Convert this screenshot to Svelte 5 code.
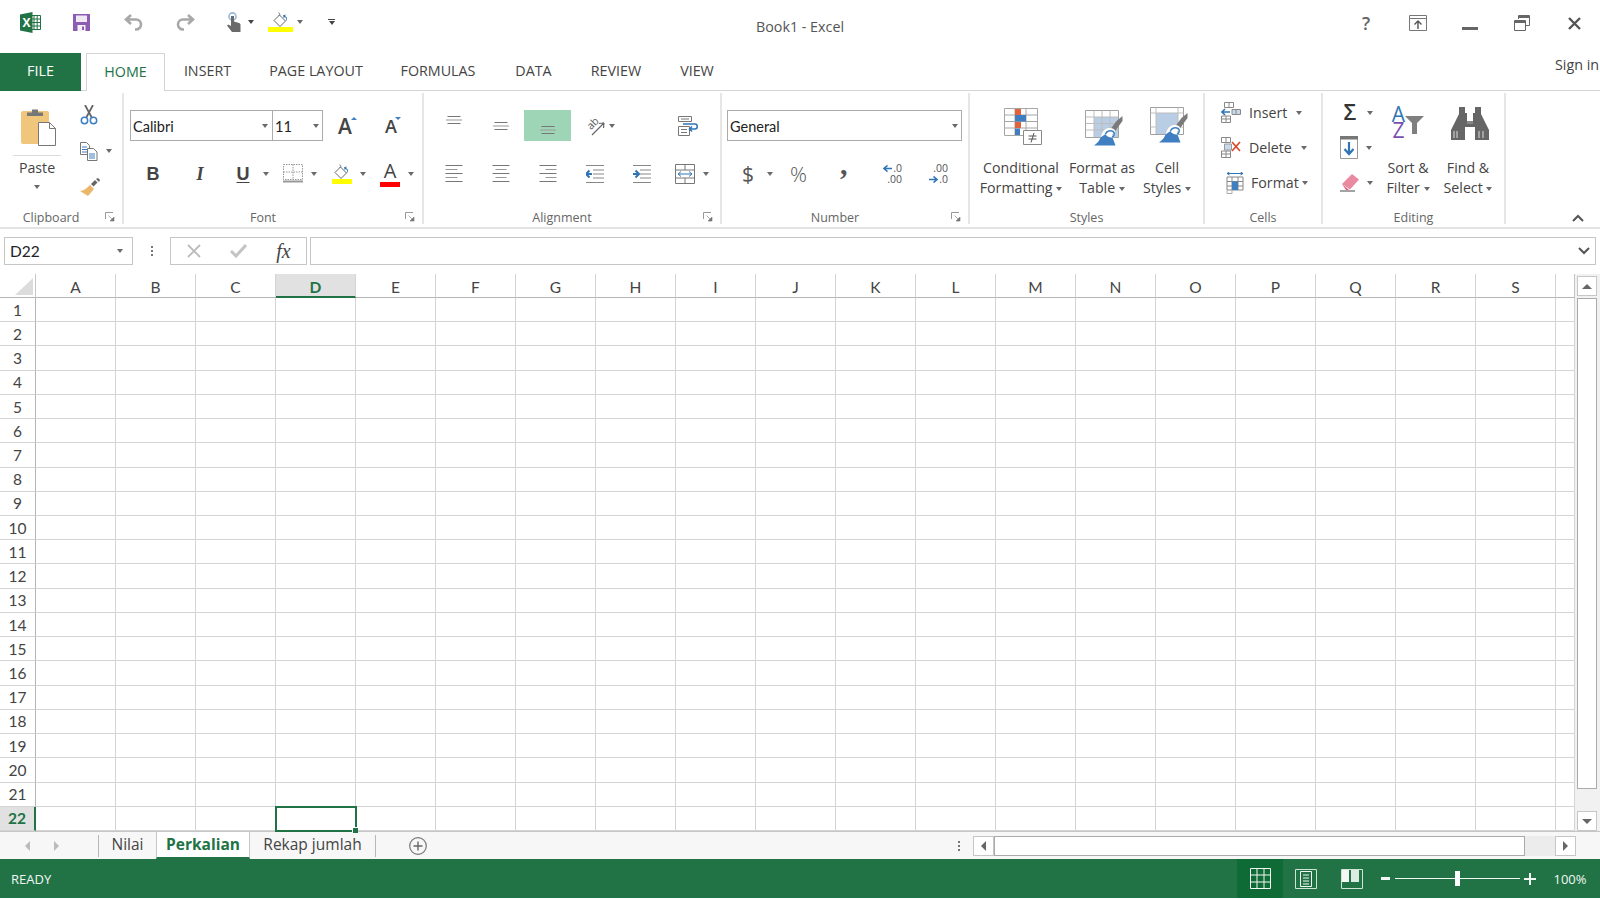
<script>
  const cols = 'ABCDEFGHIJKLMNOPQRS'.split('');
  const rows = Array.from({ length: 22 }, (_, i) => i + 1);
  const tabs = ['HOME', 'INSERT', 'PAGE LAYOUT', 'FORMULAS', 'DATA', 'REVIEW', 'VIEW'];
</script>

{#snippet launcher()}
  <svg class="launcher" width="10" height="10" viewBox="0 0 10 10" aria-hidden="true">
    <path d="M.5 7V.5H8" fill="none" stroke="#999" />
    <path d="M3.5 3.5L8 8M9 5v4H5z" fill="#777" stroke="#777" stroke-width=".6" />
  </svg>
{/snippet}

{#snippet lines(kind, y)}
  <svg width="18" height="20" viewBox="0 0 18 20" aria-hidden="true">
    {#each y as v, i}
      {@const w = y.length === 3 ? (i === 1 ? 16 : 13) : kind === 'left' ? (i % 2 ? 12 : 17) : i % 2 ? 11 : 17}
      {@const x = kind === 'left' ? 0.5 : kind === 'center' ? 9 - w / 2 : 17.5 - w}
      <path d="M{x} {v + 0.5}h{w}" stroke={i % 2 ? '#999' : '#777'} />
    {/each}
  </svg>
{/snippet}

<div class="app">
  <header class="titlebar">
    <div class="qat">
      <svg width="21" height="21" viewBox="0 0 21 21" aria-label="Excel">
        <path d="M11 3.5h9.5v14H11z" fill="#fff" stroke="#217346" />
        <path d="M14 3.5v14M17.2 3.5v14M11 7h9.5M11 10.5h9.5M11 14h9.5" stroke="#217346" />
        <path d="M0 2.6L12.5 0v21L0 18.4z" fill="#217346" />
        <text x="2.4" y="14.6" class="xmark">X</text>
      </svg>
      <svg width="17" height="17" viewBox="0 0 17 17" aria-label="Save">
        <path d="M0 0h17v17H0z" fill="#8b5cb1" />
        <path d="M3 1.5h11v6.5H3z" fill="#efe8f5" />
        <path d="M4.5 11h8v6h-8z" fill="#f4eff8" />
        <path d="M9 12.5h2V16H9z" fill="#8b5cb1" />
      </svg>
      <svg width="19" height="17" viewBox="0 0 19 17" aria-label="Undo">
        <path d="M7 1L2 5.5L7 10M2 5.5H12a5 5 0 0 1 0 10h-1" fill="none" stroke="#a8a8a8" stroke-width="2.6" />
      </svg>
      <svg width="19" height="17" viewBox="0 0 19 17" aria-label="Redo">
        <path d="M12 1L17 5.5L12 10M17 5.5H7a5 5 0 0 0 0 10h1" fill="none" stroke="#a8a8a8" stroke-width="2.6" />
      </svg>
      <span class="split wide">
        <svg width="14" height="20" viewBox="0 0 14 20" aria-label="Touch mode">
          <circle cx="5.5" cy="4.5" r="3.6" fill="none" stroke="#9ab8dc" stroke-width="1.6" />
          <path d="M4 4h3v5.5l5 1.4c1 .3 1.5 1 1.5 2V20H5L0 13.5l1.2-1L4 14z" fill="#6a6a6a" />
        </svg>
        <i class="caret dark"></i>
      </span>
      <span class="split near">
        <span class="fillwrap">
          <svg width="20" height="15" viewBox="0 0 20 15" aria-hidden="true">
            <path d="M7.5 1a1.3 1.3 0 1 1 0 2.6" fill="none" stroke="#777" />
            <path d="M8.5 3L14.5 9L9 14.5L3 8.5z" fill="#fff" stroke="#666" />
            <path d="M15 9C17 7 16 5 14 4l1-1.5-3 .7.8 3 .9-1.3c1.6.8 2.2 2.3.8 3.8z" fill="#2f75b5" />
          </svg>
          <b class="swatch yellow"></b>
        </span>
        <i class="caret"></i>
      </span>
      <span class="custom"><b></b><i class="caret dark"></i></span>
    </div>
    <div class="doc-title">Book1 - Excel</div>
    <div class="winctl">
      <span class="help">?</span>
      <svg width="18" height="16" viewBox="0 0 18 16" aria-label="Ribbon display options">
        <path d="M.5 .5h17v15H.5zM.5 3.5h17" fill="none" stroke="#777" />
        <path d="M9 14V6.5M5.5 9.5L9 6l3.500 3.500" fill="none" stroke="#555" stroke-width="1.400" />
      </svg>
      <svg class="low" width="16" height="3" viewBox="0 0 16 3" aria-label="Minimize"><path d="M0 0h16v3H0z" fill="#666" /></svg>
      <svg width="16" height="16" viewBox="0 0 16 16" aria-label="Restore">
        <path d="M4.500 4V.5h11v10H12" fill="none" stroke="#666" />
        <path d="M4.500 2h11" stroke="#666" stroke-width="2" />
        <path d="M.5 5.500h11v10H.5z" fill="#fff" stroke="#666" />
        <path d="M.5 7h11" stroke="#666" stroke-width="2" />
      </svg>
      <svg width="13" height="13" viewBox="0 0 13 13" aria-label="Close"><path d="M1 1l11 11M12 1L1 12" stroke="#555" stroke-width="2.400" /></svg>
    </div>
  </header>

  <nav class="tabrow">
    <div class="file-tab">FILE</div>
    <div class="tabs">
      {#each tabs as tab, i}
        <div class="tab" class:active={i === 0}>{tab}</div>
      {/each}
    </div>
    <div class="signin">Sign in</div>
  </nav>

  <section class="ribbon">
    <div class="group clipboard">
      <div class="body clip-body">
        <div class="paste">
          <svg width="36" height="39" viewBox="0 0 36 39" aria-hidden="true">
            <rect x="0" y="4" width="28" height="33" rx="2" fill="#efc67b" />
            <path d="M6 5.500h16V9H6zM11 2.500h6v4h-6z" fill="#777" />
            <path d="M17.500 15.500h11l6 6v17h-17z" fill="#fff" stroke="#777" />
            <path d="M28.500 15.500v6h6" fill="none" stroke="#777" />
          </svg>
          <div class="paste-line"></div>
          <span>Paste</span>
          <i class="caret"></i>
        </div>
        <div class="clip-small">
          <svg width="18" height="20" viewBox="0 0 18 20" aria-label="Cut">
            <path d="M5 0l7 13M13 0L6 13" stroke="#666" stroke-width="1.800" />
            <circle cx="4.500" cy="15.500" r="3.200" fill="none" stroke="#3f7fc1" stroke-width="1.500" />
            <circle cx="13.500" cy="15.500" r="3.200" fill="none" stroke="#3f7fc1" stroke-width="1.500" />
          </svg>
          <span class="split copy">
            <svg width="18" height="19" viewBox="0 0 18 19" aria-label="Copy">
              <path d="M.5 .5h6l3 3v9h-9z" fill="#fff" stroke="#777" />
              <path d="M2 5h5M2 7.500h5M2 10h5" stroke="#3f7fc1" />
              <path d="M7.500 6.500h6l3.500 3.500v8.500H7.500z" fill="#fff" stroke="#777" />
              <path d="M9 12h6M9 14h6M9 16h6" stroke="#3f7fc1" />
            </svg>
            <i class="caret"></i>
          </span>
          <svg width="20" height="18" viewBox="0 0 20 18" aria-label="Format painter">
            <path d="M11 6l4-4 2.500 2.500-4 4z" fill="#666" />
            <path d="M16 1l2-1 2 2-1 2z" fill="#666" />
            <path d="M10 7l4 4-6 7-8-5c3 0 7-3 10-6z" fill="#e9b66a" />
          </svg>
        </div>
      </div>
      <div class="label has-launcher">Clipboard{@render launcher()}</div>
    </div>

    <div class="group font">
      <div class="body two-rows">
        <div class="font-top">
          <div class="combo font-name"><span>Calibri</span><i class="caret"></i></div>
          <div class="combo font-size"><span>11</span><i class="caret"></i></div>
          <span class="sizer big">A<b class="up"></b></span>
          <span class="sizer small">A<b class="down"></b></span>
        </div>
        <div class="font-bottom">
          <span class="fmt bold">B</span>
          <span class="fmt ital">I</span>
          <span class="split u-split"><span class="fmt under">U</span><i class="caret"></i></span>
          <span class="split">
            <svg width="20" height="19" viewBox="0 0 20 19" aria-label="Borders">
              <path d="M.5 .5h19v15H.5zM10 .5v15M.5 8h19" fill="none" stroke="#999" stroke-dasharray="1.500 1" />
              <path d="M0 17.500h20" stroke="#999" stroke-width="2" />
            </svg>
            <i class="caret"></i>
          </span>
          <span class="split">
            <span class="fillwrap narrow">
              <svg width="20" height="15" viewBox="0 0 20 15" aria-hidden="true">
                <path d="M7.500 1a1.300 1.300 0 1 1 0 2.600" fill="none" stroke="#777" />
                <path d="M8.500 3L14.500 9L9 14.500L3 8.500z" fill="#fff" stroke="#666" />
                <path d="M15 9C17 7 16 5 14 4l1-1.500-3 .7.8 3 .9-1.300c1.600.8 2.200 2.300.8 3.800z" fill="#2f75b5" />
              </svg>
              <b class="swatch yellow"></b>
            </span>
            <i class="caret"></i>
          </span>
          <span class="split">
            <span class="colorwrap">A<b class="swatch red"></b></span>
            <i class="caret"></i>
          </span>
        </div>
      </div>
      <div class="label has-launcher">Font{@render launcher()}</div>
    </div>

    <div class="group alignment">
      <div class="body two-rows">
        <div class="align-top">
          <span class="aln">{@render lines('center', [0, 3.5, 7])}</span>
          <span class="aln">{@render lines('center', [6, 9.5, 13])}</span>
          <span class="aln on">{@render lines('center', [10, 13.5, 17])}</span>
          <span class="split orient">
            <svg class="open" width="20" height="20" viewBox="0 0 20 20" aria-label="Orientation">
              <text x="2" y="11" transform="rotate(-45 8 8)" class="ab">ab</text>
              <path d="M7 19L19 7M19 7l-5 .5M19 7l-.5 5" fill="none" stroke="#666" stroke-width="1.200" />
            </svg>
            <i class="caret"></i>
          </span>
          <span class="aln">
            <svg width="20" height="20" viewBox="0 0 20 20" aria-label="Wrap text">
              <path d="M.5 .5h13v5h-13zM.5 10.500h11v9H.5z" fill="#fff" stroke="#777" />
              <path d="M3 3h8M3 13.500h6M3 16.500h6" stroke="#777" />
              <path d="M5 8H17c3 0 3 5 0 5h-5M14 10.500L11.500 13L14 15.500" fill="none" stroke="#2f75b5" stroke-width="1.500" />
            </svg>
          </span>
        </div>
        <div class="align-bottom">
          <span class="aln">{@render lines('left', [1, 5, 9, 13, 17])}</span>
          <span class="aln">{@render lines('center', [1, 5, 9, 13, 17])}</span>
          <span class="aln">{@render lines('right', [1, 5, 9, 13, 17])}</span>
          <span class="aln">
            <svg width="18" height="20" viewBox="0 0 18 20" aria-label="Decrease indent">
              <path d="M0 1.500h18M7 6h11M7 10h11M7 14h11M0 18.500h18" stroke="#888" />
              <path d="M6 10H1M3.500 6.500L0 10l3.500 3.500" fill="none" stroke="#2f75b5" stroke-width="2" />
            </svg>
          </span>
          <span class="aln">
            <svg width="18" height="20" viewBox="0 0 18 20" aria-label="Increase indent">
              <path d="M0 1.500h18M7 6h11M7 10h11M7 14h11M0 18.500h18" stroke="#888" />
              <path d="M0 10h5M2.500 6.500L6 10l-3.500 3.500" fill="none" stroke="#2f75b5" stroke-width="2" />
            </svg>
          </span>
          <span class="split merge">
            <svg width="20" height="20" viewBox="0 0 20 20" aria-label="Merge and center">
              <path d="M.5 .5h19v19H.5zM.5 6h19M.5 14h19M10 .5V6M10 14v5.500" fill="none" stroke="#777" />
              <path d="M3 10h14M6 7.500L3 10l3 2.500M14 7.500l3 2.500-3 2.500" fill="none" stroke="#2f75b5" />
            </svg>
            <i class="caret"></i>
          </span>
        </div>
      </div>
      <div class="label has-launcher">Alignment{@render launcher()}</div>
    </div>

    <div class="group number">
      <div class="body two-rows">
        <div class="combo general"><span>General</span><i class="caret"></i></div>
        <div class="num-bottom">
          <span class="split dollar"><span class="sym">$</span><i class="caret"></i></span>
          <span class="sym pct">%</span>
          <span class="sym comma">,</span>
          <span class="decimals">
            <span class="dec-line">
              <svg width="9" height="7" viewBox="0 0 9 7" aria-hidden="true"><path d="M9 3.500H2M4.500 .5L1 3.500l3.500 3" fill="none" stroke="#2f75b5" stroke-width="1.600" /></svg>
              .0
            </span>
            <span>.00</span>
          </span>
          <span class="decimals">
            <span>.00</span>
            <span class="dec-line">
              <svg width="9" height="7" viewBox="0 0 9 7" aria-hidden="true"><path d="M0 3.500h7M4.500 .5L8 3.500l-3.500 3" fill="none" stroke="#2f75b5" stroke-width="1.600" /></svg>
              .0
            </span>
          </span>
        </div>
      </div>
      <div class="label has-launcher">Number{@render launcher()}</div>
    </div>

    <div class="group styles">
      <div class="body style-body">
        <div class="large">
          <svg class="top8" width="38" height="37" viewBox="0 0 38 37" aria-hidden="true">
            <path d="M.5 .5h33v27H.5zM.5 7h33M.5 13.500h33M.5 20h33M11 .5v27M22 .5v27" fill="#fff" stroke="#a6a6a6" />
            <path d="M11 1h6v6h-6zM11 14h6v6h-6z" fill="#e2623c" />
            <path d="M11 7h11v6.500H11zM11 20.500h5V27h-5z" fill="#3f7fc1" />
            <path d="M19.500 22.500h18v14h-18z" fill="#fff" stroke="#8a8a8a" />
            <path d="M24.500 28h8M24.500 31h8M30 25l-3 9.500" fill="none" stroke="#555" />
          </svg>
          <span class="lbl">Conditional<br />Formatting <i class="caret"></i></span>
        </div>
        <div class="large">
          <svg class="top10" width="38" height="36" viewBox="0 0 38 36" aria-hidden="true">
            <path d="M.5 .5h33v27H.5z" fill="#fff" stroke="#a0a0a0" />
            <path d="M9 7h24v20H9z" fill="#b9cde5" />
            <path d="M.5 7h33M.5 13.500h33M.5 20h33M9 .5v27M17 .5v27M25 .5v27" stroke="#bdbdbd" fill="none" />
            <path d="M37.500 6L31.500 11l-6 8 4 3 8-11z" fill="#7a7a7a" />
            <path d="M24 18c4-.5 7 2 6 4.500l-3 2 4 11H8c4-2 7-5 8-9 1-5 4-8 8-8.500z" fill="#fff" />
            <path d="M9 35.500c3-2 5.500-5 6.500-8l5-3.500c1 2.500 4 4 7 3.500l3 8z" fill="#3f7fc1" />
            <path d="M20.500 24c1-3 5-4 7.500-2.500s1 5-1 5.500" fill="none" stroke="#3f7fc1" stroke-width="1.500" />
          </svg>
          <span class="lbl">Format as<br />Table <i class="caret"></i></span>
        </div>
        <div class="large">
          <svg class="top7" width="38" height="36" viewBox="0 0 38 36" aria-hidden="true">
            <path d="M.5 .5h33v27H.5z" fill="#fff" stroke="#a0a0a0" />
            <path d="M6 6h22v21H6z" fill="#b9cde5" />
            <path d="M.5 6h33M.5 20h5M28 20h5M6 .5V27M28 .5V27" stroke="#bdbdbd" fill="none" />
            <path d="M37.500 6L31.500 11l-6 8 4 3 8-11z" fill="#7a7a7a" />
            <path d="M24 18c4-.5 7 2 6 4.500l-3 2 4 11H8c4-2 7-5 8-9 1-5 4-8 8-8.500z" fill="#fff" />
            <path d="M9 35.500c3-2 5.500-5 6.500-8l5-3.500c1 2.500 4 4 7 3.500l3 8z" fill="#3f7fc1" />
            <path d="M20.500 24c1-3 5-4 7.500-2.500s1 5-1 5.500" fill="none" stroke="#3f7fc1" stroke-width="1.500" />
          </svg>
          <span class="lbl">Cell<br />Styles <i class="caret"></i></span>
        </div>
      </div>
      <div class="label">Styles</div>
    </div>

    <div class="group cells">
      <div class="body cell-body">
        <div class="cell-row">
          <svg width="20" height="21" viewBox="0 0 20 21" aria-hidden="true">
            <path d="M3.500 .5h9v5h-9zM.5 14h9v6.500h-9zM5 14v6.500M.5 17h9M8 .5v5" fill="none" stroke="#888" />
            <path d="M11 7.500h8.500v5H11zM15 7.500v5" fill="#c9d9ec" stroke="#888" />
            <path d="M9 10H1M4 7l-3 3 3 3" fill="none" stroke="#2f75b5" stroke-width="1.600" />
          </svg>
          <span>Insert</span><i class="caret"></i>
        </div>
        <div class="cell-row">
          <svg width="20" height="21" viewBox="0 0 20 21" aria-hidden="true">
            <path d="M.5 .5h9v5h-9zM.5 14h9v6.500h-9zM5 14v6.500M.5 17h9M5 .5v5" fill="none" stroke="#888" />
            <path d="M3.500 7h7v6h-7z" fill="#c9d9ec" stroke="#999" />
            <path d="M11 5l8 9M19 5l-8 9" stroke="#d9482b" stroke-width="1.700" />
          </svg>
          <span>Delete</span><i class="caret"></i>
        </div>
        <div class="cell-row fmt-row">
          <svg width="19" height="22" viewBox="0 0 19 22" aria-hidden="true">
            <path d="M1 1.500h16M3.500 0L1 1.500 3.500 3M14.500 0L17 1.500 14.500 3" fill="none" stroke="#2f75b5" />
            <path d="M1 5h16v13H1zM1 9.500h16M1 14h16M6 5v13M12 5v13" fill="#fff" stroke="#888" />
            <path d="M6 9.500h6V18H6z" fill="#3f7fc1" />
            <path d="M1 18.500v3h5v-3" fill="none" stroke="#aaa" />
          </svg>
          <span>Format</span><i class="caret"></i>
        </div>
      </div>
      <div class="label">Cells</div>
    </div>

    <div class="group editing">
      <div class="body edit-body">
        <div class="edit-small">
          <span class="split"><span class="sigma">Σ</span><i class="caret"></i></span>
          <span class="split">
            <svg width="19" height="24" viewBox="0 0 19 24" aria-label="Fill">
              <path d="M.5 .5h17v22H.5z" fill="#fff" stroke="#999" />
              <path d="M0 0h18v3.500H0z" fill="#777" />
              <path d="M9 6v12M4.500 13L9 18l4.500-5" fill="none" stroke="#2f75b5" stroke-width="2.200" />
            </svg>
            <i class="caret"></i>
          </span>
          <span class="split">
            <svg width="20" height="19" viewBox="0 0 20 19" aria-label="Clear">
              <path d="M12 1l7 5.500-9 10L2 11z" fill="#ea8aa0" />
              <path d="M0 18h15" stroke="#666" stroke-width="1.200" />
              <path d="M2 11l4 6h3" fill="#e15f80" />
            </svg>
            <i class="caret"></i>
          </span>
        </div>
        <div class="large">
          <span class="sort-icon">
            <span class="az"><b class="a-l">A</b><b class="z-l">Z</b></span>
            <svg width="19" height="18" viewBox="0 0 19 18" aria-hidden="true">
              <path d="M0 0h19L12 7v11H7V7z" fill="#7f7f7f" />
            </svg>
          </span>
          <span class="lbl">Sort &amp;<br />Filter <i class="caret"></i></span>
        </div>
        <div class="large">
          <svg class="top7" width="38" height="33" viewBox="0 0 38 33" aria-hidden="true">
            <path d="M8 0h6v6h2v8h6V6h2V0h6v7l2 4 6 12v10H24V20h-10v13H0V23l6-12 2-4z" fill="#666" />
            <path d="M3 24v7M6 24v7M28 24v7M32 24v7" stroke="#ddd" />
            <path d="M16 14h6v3h-6z" fill="#888" />
          </svg>
          <span class="lbl">Find &amp;<br />Select <i class="caret"></i></span>
        </div>
      </div>
      <div class="label">Editing</div>
    </div>

    <div class="collapse">
      <svg width="12" height="8" viewBox="0 0 12 8" aria-label="Collapse the ribbon"><path d="M1 7l5-5 5 5" fill="none" stroke="#555" stroke-width="2" /></svg>
    </div>
  </section>

  <section class="formula">
    <div class="namebox"><span>D22</span><i class="caret"></i></div>
    <div class="vdots"><b></b><b></b><b></b></div>
    <div class="fx-box">
      <svg width="16" height="16" viewBox="0 0 16 16" aria-label="Cancel"><path d="M2 2l12 12M14 2L2 14" stroke="#bbb" stroke-width="1.800" /></svg>
      <svg width="17" height="14" viewBox="0 0 17 14" aria-label="Enter"><path d="M1 7l5 5L16 1" fill="none" stroke="#c4c4c4" stroke-width="3" /></svg>
      <span class="fx">fx</span>
    </div>
    <div class="formula-input">
      <svg width="12" height="8" viewBox="0 0 12 8" aria-hidden="true"><path d="M1 1l5 5 5-5" fill="none" stroke="#555" stroke-width="2" /></svg>
    </div>
  </section>

  <section class="sheet">
    <div class="grid">
      <div class="corner">
        <svg width="18" height="17" viewBox="0 0 18 17" aria-hidden="true"><path d="M18 0v17H0z" fill="#dcdcdc" /></svg>
      </div>
      {#each cols as col}
        <div class="colhead" class:sel={col === 'D'}>{col}</div>
      {/each}
      <div class="colhead edge"></div>
      {#each rows as row}
        <div class="rowhead" class:sel={row === 22}>{row}</div>
        {#each cols as col}
          <div class="cell" class:current={col === 'D' && row === 22}>
            {#if col === 'D' && row === 22}<b class="handle"></b>{/if}
          </div>
        {/each}
        <div class="cell"></div>
      {/each}
    </div>
    <div class="vscroll">
      <div class="sbtn"><i class="tri up"></i></div>
      <div class="vthumb"></div>
      <div class="sbtn bottom"><i class="tri down"></i></div>
    </div>
  </section>

  <section class="sheet-tabs">
    <div class="nav"><i class="tri left pale"></i><i class="tri right pale"></i></div>
    <div class="stab first">Nilai</div>
    <div class="stab active">Perkalian</div>
    <div class="stab last">Rekap jumlah</div>
    <svg class="plus" width="18" height="18" viewBox="0 0 18 18" aria-label="New sheet">
      <circle cx="9" cy="9" r="8.300" fill="none" stroke="#777" stroke-width="1.200" />
      <path d="M4.500 9h9M9 4.500v9" stroke="#666" stroke-width="1.400" />
    </svg>
    <div class="vdots tabs-dots"><b></b><b></b><b></b></div>
    <div class="hscroll">
      <div class="hbtn"><i class="tri left"></i></div>
      <div class="hthumb"></div>
      <div class="hbtn"><i class="tri right"></i></div>
    </div>
  </section>

  <footer class="status">
    <span class="ready">READY</span>
    <div class="views">
      <span class="view active">
        <svg width="21" height="21" viewBox="0 0 21 21" aria-label="Normal"><path d="M.5 .5h20v20H.5zM7 .5v20M14 .5v20M.5 7h20M.5 14h20" fill="none" stroke="#f2f8f4" /></svg>
      </span>
      <span class="view">
        <svg width="22" height="20" viewBox="0 0 22 20" aria-label="Page layout">
          <path d="M.5 .5h21v19H.5z" fill="none" stroke="#cfe3d7" />
          <path d="M5.500 2.500h11v15h-11z" fill="none" stroke="#f2f8f4" />
          <path d="M8 6h6M8 9h6M8 12h6M8 15h6" stroke="#f2f8f4" />
        </svg>
      </span>
      <span class="view">
        <svg width="22" height="20" viewBox="0 0 22 20" aria-label="Page break preview">
          <path d="M.5 .5h21v19H.5z" fill="none" stroke="#cfe3d7" />
          <path d="M1 1h7v12H1z" fill="#f2f8f4" />
          <path d="M10 1h8v12h-8z" fill="#dcebe2" />
        </svg>
      </span>
    </div>
    <div class="zoom">
      <b class="minus"></b>
      <div class="slider"><b></b></div>
      <span class="zplus"><b></b><b></b></span>
    </div>
    <span class="pct-label">100%</span>
  </footer>
</div>

<style>
  :global(body) {
    margin: 0;
    background: #fff;
  }

  .app {
    width: 1600px;
    height: 900px;
    overflow: hidden;
    display: flex;
    flex-direction: column;
    background: #fff;
    color: #444;
    font-family: 'Open Sans', 'Liberation Sans', sans-serif;
    font-size: 14.2px;
  }

  svg {
    display: block;
    flex: none;
  }

  svg.open {
    overflow: visible;
  }

  i,
  b {
    font-style: normal;
    font-weight: inherit;
  }

  .caret {
    display: inline-block;
    width: 0;
    height: 0;
    flex: none;
    vertical-align: middle;
    border-left: 3.5px solid transparent;
    border-right: 3.5px solid transparent;
    border-top: 4px solid #6a6a6a;
  }

  .caret.dark {
    border-top-color: #444;
  }

  .split {
    display: flex;
    align-items: center;
    gap: 8px;
  }

  /* title bar */
  .titlebar {
    height: 53px;
    flex: none;
    display: grid;
    grid-template-columns: 1fr auto 1fr;
    align-items: start;
  }

  .qat {
    display: grid;
    grid-template-columns: 53px 51px 52px 51px 41px 60px 20px;
    justify-items: start;
    align-items: center;
    height: 44px;
    padding-left: 20px;
  }

  .xmark {
    font: 700 12px 'Open Sans', sans-serif;
    fill: #fff;
  }

  .wide {
    gap: 7px;
  }

  .near {
    gap: 4px;
  }

  .fillwrap {
    display: flex;
    flex-direction: column;
    align-items: center;
    width: 25px;
  }

  .fillwrap.narrow {
    width: 20px;
  }

  .swatch {
    display: block;
    height: 5px;
    width: 100%;
  }

  .yellow {
    background: #ffff00;
  }

  .red {
    background: #ff0000;
  }

  .custom {
    display: flex;
    flex-direction: column;
    align-items: center;
    gap: 1px;
  }

  .custom b {
    width: 7px;
    height: 1px;
    background: #444;
  }

  .doc-title {
    padding-top: 17px;
    font-size: 14.300px;
    color: #555;
  }

  .winctl {
    justify-self: end;
    display: grid;
    grid-template-columns: repeat(5, 52px);
    justify-items: center;
    align-items: center;
    height: 46px;
    color: #666;
  }

  .help {
    font-size: 18px;
    font-weight: 600;
  }

  .low {
    margin-top: 11px;
  }

  /* tabs */
  .tabrow {
    height: 38px;
    flex: none;
    display: flex;
    border-bottom: 1px solid #d4d4d4;
    box-sizing: border-box;
    font-size: 14.300px;
  }

  .file-tab {
    width: 81px;
    height: 38px;
    display: flex;
    align-items: center;
    justify-content: center;
    padding-bottom: 3px;
    background: #217346;
    color: #fff;
    box-sizing: border-box;
  }

  .tabs {
    display: grid;
    grid-template-columns: 79px 85px 132px 112px 79px 86px 76px;
    margin-left: 5px;
  }

  .tab {
    height: 38px;
    display: flex;
    align-items: center;
    justify-content: center;
    padding-bottom: 3px;
    box-sizing: border-box;
    white-space: nowrap;
    color: #444;
  }

  .tab.active {
    background: #fff;
    color: #217346;
    border: 1px solid #d4d4d4;
    border-bottom: 0;
  }

  .signin {
    margin-left: auto;
    padding-top: 2px;
    white-space: nowrap;
    width: 45px;
    color: #444;
  }

  /* ribbon */
  .ribbon {
    height: 138px;
    flex: none;
    display: flex;
    box-sizing: border-box;
    border-bottom: 2px solid #e3e3e3;
    padding-bottom: 3px;
  }

  .group {
    display: flex;
    flex-direction: column;
    box-sizing: border-box;
    border-right: 2px solid #e6e6e6;
    margin-top: 2px;
  }

  .clipboard { width: 124px; }
  .font { width: 300px; }
  .alignment { width: 298px; }
  .number { width: 248px; }
  .styles { width: 235px; }
  .cells { width: 118px; }
  .editing { width: 183px; }

  .body {
    flex: 1;
    min-height: 0;
  }

  .label {
    position: relative;
    height: 14px;
    flex: none;
    display: flex;
    align-items: center;
    justify-content: center;
    font-size: 12.500px;
    color: #666;
  }

  .label.has-launcher {
    padding-right: 20px;
  }

  .launcher {
    position: absolute;
    right: 7px;
    top: 2px;
  }

  .clip-body {
    display: flex;
  }

  .paste {
    width: 74px;
    padding-top: 14px;
    display: flex;
    flex-direction: column;
    align-items: center;
  }

  .paste svg {
    margin-left: 4px;
  }

  .paste-line {
    width: 48px;
    height: 1px;
    margin: 9px 0 2px;
    background: #dcdcdc;
  }

  .paste span {
    margin-bottom: 8px;
  }

  .clip-small {
    display: grid;
    grid-auto-rows: 36px;
    align-items: center;
    justify-items: start;
    padding: 4px 0 0 6px;
  }

  .two-rows {
    display: grid;
    grid-template-rows: 31px 31px;
    row-gap: 17px;
    padding-top: 17px;
  }

  .font-top {
    display: flex;
    padding-left: 6px;
  }

  .combo {
    display: flex;
    align-items: center;
    justify-content: space-between;
    box-sizing: border-box;
    height: 31px;
    padding: 1px 3px 0 2px;
    border: 1px solid #ababab;
    background: #fff;
    font-family: Lato, 'Open Sans', sans-serif;
    font-size: 14.500px;
    color: #222;
  }

  .font-name {
    width: 143px;
    padding-right: 4px;
  }

  .font-size {
    width: 51px;
    margin-left: -1px;
  }

  .sizer {
    position: relative;
    width: 46px;
    display: flex;
    align-items: center;
    justify-content: center;
    color: #444;
    font-weight: 600;
    font-family: 'Open Sans', sans-serif;
  }

  .sizer.big {
    font-size: 21px;
    margin-left: -1px;
  }

  .sizer.small {
    font-size: 18px;
  }

  .sizer b {
    position: absolute;
    top: 7px;
    left: 29px;
    border-left: 3px solid transparent;
    border-right: 3px solid transparent;
  }

  .sizer.small b {
    left: 27px;
  }

  .sizer .up {
    border-bottom: 3px solid #3f7fc1;
  }

  .sizer .down {
    border-top: 3px solid #3f7fc1;
  }

  .font-bottom {
    display: grid;
    grid-template-columns: 47px 43px 48px 49px 48px 40px;
    align-items: center;
    justify-items: start;
    padding-left: 21px;
  }

  .fmt {
    display: block;
    width: 16px;
    text-align: center;
    font-size: 18px;
    line-height: 20px;
    color: #444;
    font-family: 'Liberation Sans', sans-serif;
  }

  .bold {
    font-weight: 700;
  }

  .ital {
    font-style: italic;
    font-weight: 700;
    font-family: 'Liberation Serif', serif;
  }

  .under {
    font-weight: 700;
    text-decoration: underline;
    text-underline-offset: 2px;
  }

  .u-split {
    gap: 12px;
  }

  .colorwrap {
    display: flex;
    flex-direction: column;
    align-items: center;
    width: 20px;
    font-size: 20px;
    line-height: 20px;
    color: #444;
  }

  .colorwrap .swatch {
    margin-top: 1px;
  }

  .align-top {
    display: grid;
    grid-template-columns: 47px 47px 47px 93px 48px;
    align-items: center;
    justify-items: center;
    padding-left: 6px;
  }

  .align-bottom {
    display: grid;
    grid-template-columns: 47px 47px 47px 47px 47px 56px;
    align-items: center;
    justify-items: center;
    padding-left: 6px;
  }

  .aln {
    display: flex;
    align-items: center;
    justify-content: center;
    width: 100%;
    height: 100%;
  }

  .aln.on {
    background: #9fd5b7;
  }

  .orient {
    justify-self: start;
    padding-left: 14px;
    gap: 4px;
  }

  .ab {
    font: 10.500px 'Open Sans', sans-serif;
    fill: #555;
  }

  .merge {
    justify-self: start;
    padding-left: 10px;
  }

  .general {
    width: 235px;
    margin-left: 5px;
  }

  .num-bottom {
    display: grid;
    grid-template-columns: 48px 50px 40px 46px 46px;
    align-items: center;
    justify-items: start;
    padding-left: 20px;
  }

  .dollar {
    gap: 13px;
  }

  .sym {
    font-size: 21px;
    line-height: 24px;
    color: #555;
  }

  .pct {
    font-size: 21px;
    font-weight: 300;
  }

  .comma {
    font-weight: 700;
    font-family: 'Liberation Serif', serif;
    font-size: 30px;
    line-height: 20px;
    margin-top: -20px;
  }

  .decimals {
    display: flex;
    flex-direction: column;
    align-items: flex-end;
    width: 24px;
    margin-left: -2px;
    font-size: 10.500px;
    line-height: 11px;
    color: #555;
  }

  .dec-line {
    display: flex;
    align-items: center;
    gap: 1px;
  }

  .style-body {
    display: grid;
    grid-template-columns: 84px 78px 52px;
    padding-left: 9px;
  }

  .large {
    display: grid;
    grid-template-rows: 49px auto;
    justify-items: center;
    padding-top: 7px;
  }

  .top7 {
    margin: 7px 0 0 3px;
  }

  .top8 {
    margin: 8px 0 0 3px;
  }

  .top10 {
    margin: 10px 0 0 3px;
  }

  .sort-icon {
    display: flex;
    align-items: flex-start;
  }

  .lbl {
    display: block;
    margin-top: 9px;
    text-align: center;
    line-height: 20px;
    white-space: nowrap;
  }

  .cell-body {
    display: grid;
    grid-auto-rows: 35px;
    padding-top: 2px;
    align-items: center;
  }

  .cell-row {
    display: flex;
    align-items: center;
    padding-left: 16px;
    gap: 8px;
  }

  .cell-row .caret {
    margin-left: 1px;
  }

  .fmt-row {
    padding-left: 21px;
    gap: 6px;
  }

  .fmt-row .caret {
    margin-left: -3px;
  }

  .edit-body {
    display: grid;
    grid-template-columns: 58px 54px 66px;
  }

  .edit-small {
    display: grid;
    grid-auto-rows: 35px;
    align-items: center;
    justify-items: start;
    padding: 2px 0 0 17px;
  }

  .edit-small .split {
    gap: 7px;
  }

  .sigma {
    width: 20px;
    margin-top: -4px;
    text-align: center;
    font-size: 22px;
    line-height: 24px;
    color: #333;
    font-weight: 600;
  }

  .az {
    display: flex;
    flex-direction: column;
    align-items: center;
    font-size: 21px;
    line-height: 16px;
    padding-top: 6px;
  }

  .a-l {
    color: #2f75b5;
  }

  .z-l {
    color: #7b4fb0;
  }

  .sort-icon svg {
    margin-top: 16px;
  }

  .collapse {
    flex: 1;
    display: flex;
    justify-content: flex-end;
    align-items: flex-end;
    padding: 0 16px 2px 0;
  }

  /* formula bar */
  .formula {
    height: 45px;
    flex: none;
    display: flex;
    align-items: flex-start;
    box-sizing: border-box;
    padding: 8px 4px 0;
  }

  .namebox {
    width: 129px;
    height: 28px;
    box-sizing: border-box;
    display: flex;
    align-items: center;
    justify-content: space-between;
    padding: 0 9px 0 5px;
    border: 1px solid #c6c6c6;
    font-family: Lato, sans-serif;
    font-size: 15.500px;
    color: #222;
  }

  .vdots {
    width: 37px;
    height: 28px;
    display: flex;
    flex-direction: column;
    align-items: center;
    justify-content: center;
    gap: 2px;
  }

  .vdots b {
    width: 2px;
    height: 2px;
    background: #777;
  }

  .fx-box {
    width: 137px;
    height: 28px;
    box-sizing: border-box;
    display: grid;
    grid-template-columns: 1fr 1fr 1fr;
    justify-items: center;
    align-items: center;
    border: 1px solid #c6c6c6;
  }

  .fx {
    font: italic 400 20px 'Liberation Serif', serif;
    color: #444;
  }

  .formula-input {
    flex: 1;
    height: 28px;
    box-sizing: border-box;
    margin-left: 3px;
    display: flex;
    align-items: center;
    justify-content: flex-end;
    padding-right: 5px;
    border: 1px solid #c6c6c6;
  }

  /* sheet */
  .sheet {
    height: 558px;
    flex: none;
    display: flex;
    box-sizing: border-box;
    border-bottom: 1px solid #c6c6c6;
  }

  .grid {
    width: 1575px;
    height: 557px;
    display: grid;
    grid-template-columns: 36px repeat(19, 80px) 19px;
    grid-template-rows: 24px repeat(22, 1fr);
    font-family: Lato, 'Open Sans', sans-serif;
    font-size: 15.500px;
  }

  .corner {
    display: flex;
    align-items: flex-end;
    justify-content: flex-end;
    box-sizing: border-box;
    padding: 0 2px 2px 0;
    border-right: 1px solid #c6c6c6;
    border-bottom: 1px solid #b5b5b5;
  }

  .colhead,
  .rowhead {
    display: flex;
    align-items: center;
    justify-content: center;
    box-sizing: border-box;
    color: #444;
  }

  .colhead {
    padding-top: 3px;
    border-right: 1px solid #d4d4d4;
    border-bottom: 1px solid #b5b5b5;
  }

  .colhead.edge {
    border-right: 1px solid #c6c6c6;
  }

  .colhead.sel {
    background: #e1e1e1;
    border-bottom: 2px solid #217346;
    color: #217346;
    font-weight: 700;
  }

  .rowhead {
    border-right: 1px solid #b5b5b5;
    border-bottom: 1px solid #d4d4d4;
  }

  .rowhead.sel {
    background: #e1e1e1;
    border-right: 2px solid #217346;
    color: #217346;
    font-weight: 700;
  }

  .cell {
    position: relative;
    box-sizing: border-box;
    border-right: 1px solid #d4d4d4;
    border-bottom: 1px solid #d4d4d4;
  }

  .cell.current {
    outline: 2px solid #217346;
    outline-offset: -1px;
    z-index: 1;
  }

  .handle {
    position: absolute;
    right: -3px;
    bottom: -3px;
    width: 5px;
    height: 5px;
    background: #217346;
    border: 1px solid #fff;
    border-right: 0;
    border-bottom: 0;
  }

  .vscroll {
    flex: 1;
    display: flex;
    flex-direction: column;
    align-items: center;
    padding: 2px 3px 0 2px;
    background: #f1f1f1;
    box-sizing: border-box;
  }

  .sbtn {
    width: 20px;
    height: 20px;
    flex: none;
    box-sizing: border-box;
    display: flex;
    align-items: center;
    justify-content: center;
    background: #fff;
    border: 1px solid #c6c6c6;
  }

  .sbtn.bottom {
    margin-top: auto;
  }

  .vthumb {
    width: 20px;
    height: 491px;
    margin-top: 2px;
    box-sizing: border-box;
    background: #fff;
    border: 1px solid #ababab;
  }

  .tri {
    display: block;
    width: 0;
    height: 0;
  }

  .tri.up {
    border-left: 5px solid transparent;
    border-right: 5px solid transparent;
    border-bottom: 5px solid #666;
  }

  .tri.down {
    border-left: 5px solid transparent;
    border-right: 5px solid transparent;
    border-top: 5px solid #666;
  }

  .tri.left {
    border-top: 5px solid transparent;
    border-bottom: 5px solid transparent;
    border-right: 5px solid #666;
  }

  .tri.right {
    border-top: 5px solid transparent;
    border-bottom: 5px solid transparent;
    border-left: 5px solid #666;
  }

  .tri.left.pale {
    border-right-color: #bbb;
  }

  .tri.right.pale {
    border-left-color: #bbb;
  }

  /* sheet tabs */
  .sheet-tabs {
    height: 27px;
    flex: none;
    display: flex;
    align-items: center;
    background: #f7f7f7;
    font-size: 15.500px;
  }

  .nav {
    width: 99px;
    height: 22px;
    box-sizing: border-box;
    display: flex;
    align-items: center;
    gap: 24px;
    padding-left: 25px;
    border-right: 1px solid #b8b8b8;
  }

  .stab {
    height: 27px;
    display: flex;
    align-items: center;
    justify-content: center;
    padding-bottom: 4px;
    box-sizing: border-box;
    white-space: nowrap;
    color: #444;
  }

  .stab.first {
    width: 57px;
  }

  .stab.active {
    width: 94px;
    background: #fff;
    color: #217346;
    font-weight: 700;
    padding-bottom: 2px;
    border-bottom: 2px solid #217346;
    border-left: 1px solid #c6c6c6;
    border-right: 1px solid #c6c6c6;
  }

  .stab.last {
    width: 126px;
    height: 22px;
    border-right: 1px solid #b8b8b8;
  }

  .plus {
    margin-left: 33px;
  }

  .tabs-dots {
    width: 16px;
    height: 27px;
    margin-left: auto;
  }

  .hscroll {
    width: 603px;
    height: 20px;
    margin: 0 24px 0 6px;
    display: flex;
    background: #ececec;
  }

  .hbtn {
    width: 21px;
    flex: none;
    box-sizing: border-box;
    display: flex;
    align-items: center;
    justify-content: center;
    background: #fff;
    border: 1px solid #c6c6c6;
  }

  .hthumb {
    width: 531px;
    margin: 0 30px 0 0;
    box-sizing: border-box;
    background: #fff;
    border: 1px solid #ababab;
  }

  /* status bar */
  .status {
    height: 39px;
    flex: none;
    display: flex;
    align-items: center;
    background: #217346;
    color: #f2f8f4;
    font-size: 13px;
  }

  .ready {
    padding-left: 11px;
  }

  .views {
    margin-left: auto;
    display: grid;
    grid-template-columns: 46px 46px 46px;
    height: 100%;
  }

  .view {
    display: flex;
    align-items: center;
    justify-content: center;
  }

  .view.active {
    background: #0e6b35;
  }

  .zoom {
    display: flex;
    align-items: center;
    margin-left: 6px;
  }

  .minus {
    width: 9px;
    height: 3px;
    background: #f2f8f4;
  }

  .slider {
    position: relative;
    width: 125px;
    height: 1px;
    margin-left: 5px;
    background: #f2f8f4;
  }

  .slider b {
    position: absolute;
    left: 60px;
    top: -7px;
    width: 5px;
    height: 15px;
    background: #fff;
  }

  .zplus {
    position: relative;
    width: 12px;
    height: 12px;
    margin-left: 4px;
  }

  .zplus b {
    position: absolute;
    background: #f2f8f4;
  }

  .zplus b:first-child {
    left: 0;
    top: 5px;
    width: 12px;
    height: 2px;
  }

  .zplus b:last-child {
    left: 5px;
    top: 0;
    width: 2px;
    height: 12px;
  }

  .pct-label {
    width: 64px;
    text-align: center;
    box-sizing: border-box;
    padding-left: 4px;
  }
</style>
